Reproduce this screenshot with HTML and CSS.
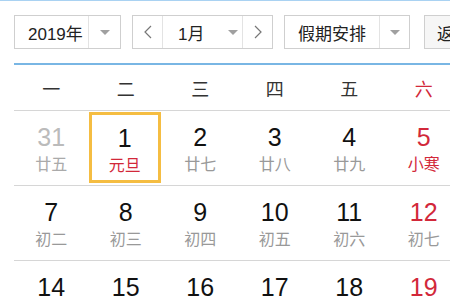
FILE: index.html
```html
<!DOCTYPE html>
<html lang="zh">
<head>
<meta charset="utf-8">
<link rel="stylesheet" href="styles.css">
</head>
<body>
<div class="page">
  <div class="toolbar">
    <div class="select year">
      <span class="label">2019年</span>
      <span class="drop"><i class="tri"></i></span>
    </div>
    <div class="month-group">
      <span class="nav"><svg width="8" height="14" viewBox="0 0 8 14"><polyline points="7,1 1,7 7,13" fill="none" stroke="#777" stroke-width="1.2"/></svg></span>
      <span class="month"><span class="label">1月</span><i class="tri"></i></span>
      <span class="nav"><svg width="8" height="14" viewBox="0 0 8 14"><polyline points="1,1 7,7 1,13" fill="none" stroke="#777" stroke-width="1.2"/></svg></span>
    </div>
    <div class="select holiday">
      <span class="label">假期安排</span>
      <span class="drop"><i class="tri"></i></span>
    </div>
    <div class="btn">返</div>
  </div>
  <div class="calendar">
    <div class="week">
      <div>一</div><div>二</div><div>三</div><div>四</div><div>五</div><div class="red">六</div>
    </div>
    <div class="row">
      <div class="cell other"><span class="num">31</span><span class="lunar">廿五</span></div>
      <div class="cell today"><span class="num">1</span><span class="lunar red">元旦</span></div>
      <div class="cell"><span class="num">2</span><span class="lunar">廿七</span></div>
      <div class="cell"><span class="num">3</span><span class="lunar">廿八</span></div>
      <div class="cell"><span class="num">4</span><span class="lunar">廿九</span></div>
      <div class="cell weekend"><span class="num">5</span><span class="lunar red">小寒</span></div>
    </div>
    <div class="row">
      <div class="cell"><span class="num">7</span><span class="lunar">初二</span></div>
      <div class="cell"><span class="num">8</span><span class="lunar">初三</span></div>
      <div class="cell"><span class="num">9</span><span class="lunar">初四</span></div>
      <div class="cell"><span class="num">10</span><span class="lunar">初五</span></div>
      <div class="cell"><span class="num">11</span><span class="lunar">初六</span></div>
      <div class="cell weekend"><span class="num">12</span><span class="lunar">初七</span></div>
    </div>
    <div class="row last">
      <div class="cell"><span class="num">14</span></div>
      <div class="cell"><span class="num">15</span></div>
      <div class="cell"><span class="num">16</span></div>
      <div class="cell"><span class="num">17</span></div>
      <div class="cell"><span class="num">18</span></div>
      <div class="cell weekend"><span class="num">19</span></div>
    </div>
  </div>
</div>
</body>
</html>
```
FILE: styles.css
```css
html, body {
  margin: 0;
  padding: 0;
  background: #fff;
  overflow: hidden;
  width: 450px;
  height: 300px;
}
body {
  font-family: "Liberation Sans", "Noto Sans CJK SC", sans-serif;
  color: #222;
}
.page {
  border-top: 1px solid #a9d2f2;
  padding: 14px 0 0 14px;
  width: 436px;
  height: 285px;
  overflow: hidden;
}
.toolbar {
  display: flex;
  height: 34px;
  align-items: stretch;
}
.select, .month-group, .btn {
  box-sizing: border-box;
  border: 1px solid #cfcfcf;
  display: flex;
  align-items: stretch;
  font-size: 17px;
  color: #222;
  flex-shrink: 0;
}
.label {
  display: flex;
  align-items: center;
}
.year { width: 107px; }
.year .label { width: 73px; padding-left: 13px; box-sizing: border-box; }
.drop {
  flex: 1;
  border-left: 1px solid #e3e3e3;
  display: flex;
  align-items: center;
  justify-content: center;
}
.tri {
  display: block;
  width: 0;
  height: 0;
  border-left: 5px solid transparent;
  border-right: 5px solid transparent;
  border-top: 5px solid #a0a0a0;
}
.month-group {
  margin-left: 11px;
  width: 141px;
}
.nav {
  width: 29px;
  display: flex;
  align-items: center;
  justify-content: center;
}
.month {
  width: 81px;
  border-left: 1px solid #e3e3e3;
  border-right: 1px solid #e3e3e3;
  display: flex;
  align-items: center;
  padding-left: 15px;
  box-sizing: border-box;
}
.month .label { width: 50px; }
.holiday {
  margin-left: 11px;
  width: 126px;
}
.holiday .label { width: 94px; padding-left: 13px; box-sizing: border-box; }
.btn {
  margin-left: 14px;
  width: 40px;
  background: #f6f6f6;
  align-items: center;
  padding-left: 12px;
  border-right: none;
}
.calendar {
  margin-top: 14px;
  border-top: 2px solid #79b6e4;
}
.week {
  display: grid;
  grid-template-columns: repeat(6, 74.5px) 1fr;
  height: 45px;
  align-items: center;
  border-bottom: 1px solid #d6d6d6;
  font-family: "Noto Sans CJK SC", sans-serif;
  font-size: 18px;
  color: #333;
}
.week div { text-align: center; }
.red { color: #d2283a; }
.row {
  display: grid;
  grid-template-columns: repeat(6, 74.5px) 1fr;
  height: 74px;
  border-bottom: 1px solid #d6d6d6;
}
.cell {
  display: flex;
  flex-direction: column;
  align-items: center;
  box-sizing: border-box;
  padding-top: 11px;
}
.num {
  font-family: "Liberation Sans", sans-serif;
  font-size: 25px;
  line-height: 30px;
  color: #111;
}
.lunar {
  font-family: "Noto Sans CJK SC", sans-serif;
  font-size: 16px;
  line-height: 22px;
  color: #999;
}
.lunar.red { color: #d2283a; }
.other .num { color: #bbb; }
.other .lunar { color: #aaa; }
.weekend .num { color: #d2283a; }
.today {
  border: 3px solid #f5bd42;
  margin: 1px 2px 2px 0;
  padding-top: 8px;
}
```
